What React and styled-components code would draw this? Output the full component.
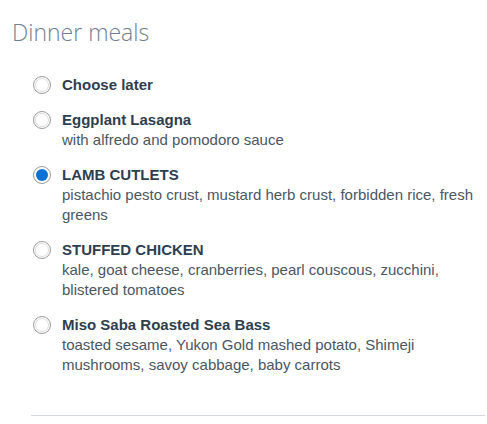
import React, { useState } from "react";
import styled, { createGlobalStyle } from "styled-components";

const Global = createGlobalStyle`
  html, body { margin: 0; padding: 0; background: #ffffff; }
  body { font-family: "Liberation Sans", Arial, sans-serif; }
`;

const Page = styled.div`
  width: 487px;
  padding: 17px 0 0 0;
  box-sizing: border-box;
`;

const Heading = styled.h2`
  margin: 0 0 0 12px;
  font-family: "Open Sans", sans-serif;
  font-weight: 300;
  font-size: 23px;
  line-height: 30px;
  color: #6f8190;
`;

const List = styled.div`
  display: flex;
  flex-direction: column;
  gap: 15px;
  margin: 28px 0 0 33px;
  width: 452px;
`;

const Option = styled.label`
  display: flex;
  align-items: flex-start;
  gap: 11px;
  cursor: pointer;
`;

const Radio = styled.span`
  flex: none;
  width: 18px;
  height: 18px;
  margin-top: 1px;
  box-sizing: border-box;
  border-radius: 50%;
  border: 1px solid #9a9a9a;
  background: #ffffff;
  display: flex;
  align-items: center;
  justify-content: center;
  &::after {
    content: "";
    width: ${p => (p.$checked ? "12px" : "14px")};
    height: ${p => (p.$checked ? "12px" : "14px")};
    box-sizing: border-box;
    border-radius: 50%;
    border: ${p => (p.$checked ? "none" : "1px solid #dcdcdc")};
    background: ${p => (p.$checked ? "#0a72d6" : "transparent")};
  }
`;

const Text = styled.div`
  display: flex;
  flex-direction: column;
  font-size: 15px;
  line-height: 20px;
`;

const Title = styled.span`
  font-weight: 700;
  color: #2f3e4e;
`;

const Desc = styled.span`
  color: #4b5663;
`;

const Divider = styled.hr`
  margin: 40px 2px 0 31px;
  border: none;
  border-top: 1px solid #d3d9df;
`;

const meals = [
  { title: "Choose later" },
  { title: "Eggplant Lasagna", desc: "with alfredo and pomodoro sauce" },
  {
    title: "LAMB CUTLETS",
    desc: "pistachio pesto crust, mustard herb crust, forbidden rice, fresh greens",
  },
  {
    title: "STUFFED CHICKEN",
    desc: "kale, goat cheese, cranberries, pearl couscous, zucchini, blistered tomatoes",
  },
  {
    title: "Miso Saba Roasted Sea Bass",
    desc: "toasted sesame, Yukon Gold mashed potato, Shimeji mushrooms, savoy cabbage, baby carrots",
  },
];

export default function App() {
  const [selected, setSelected] = useState(2);
  return (
    <>
      <Global />
      <Page>
        <Heading>Dinner meals</Heading>
        <List>
          {meals.map((m, i) => (
            <Option key={m.title} onClick={() => setSelected(i)}>
              <Radio $checked={selected === i} />
              <Text>
                <Title>{m.title}</Title>
                {m.desc && <Desc>{m.desc}</Desc>}
              </Text>
            </Option>
          ))}
        </List>
        <Divider />
      </Page>
    </>
  );
}
